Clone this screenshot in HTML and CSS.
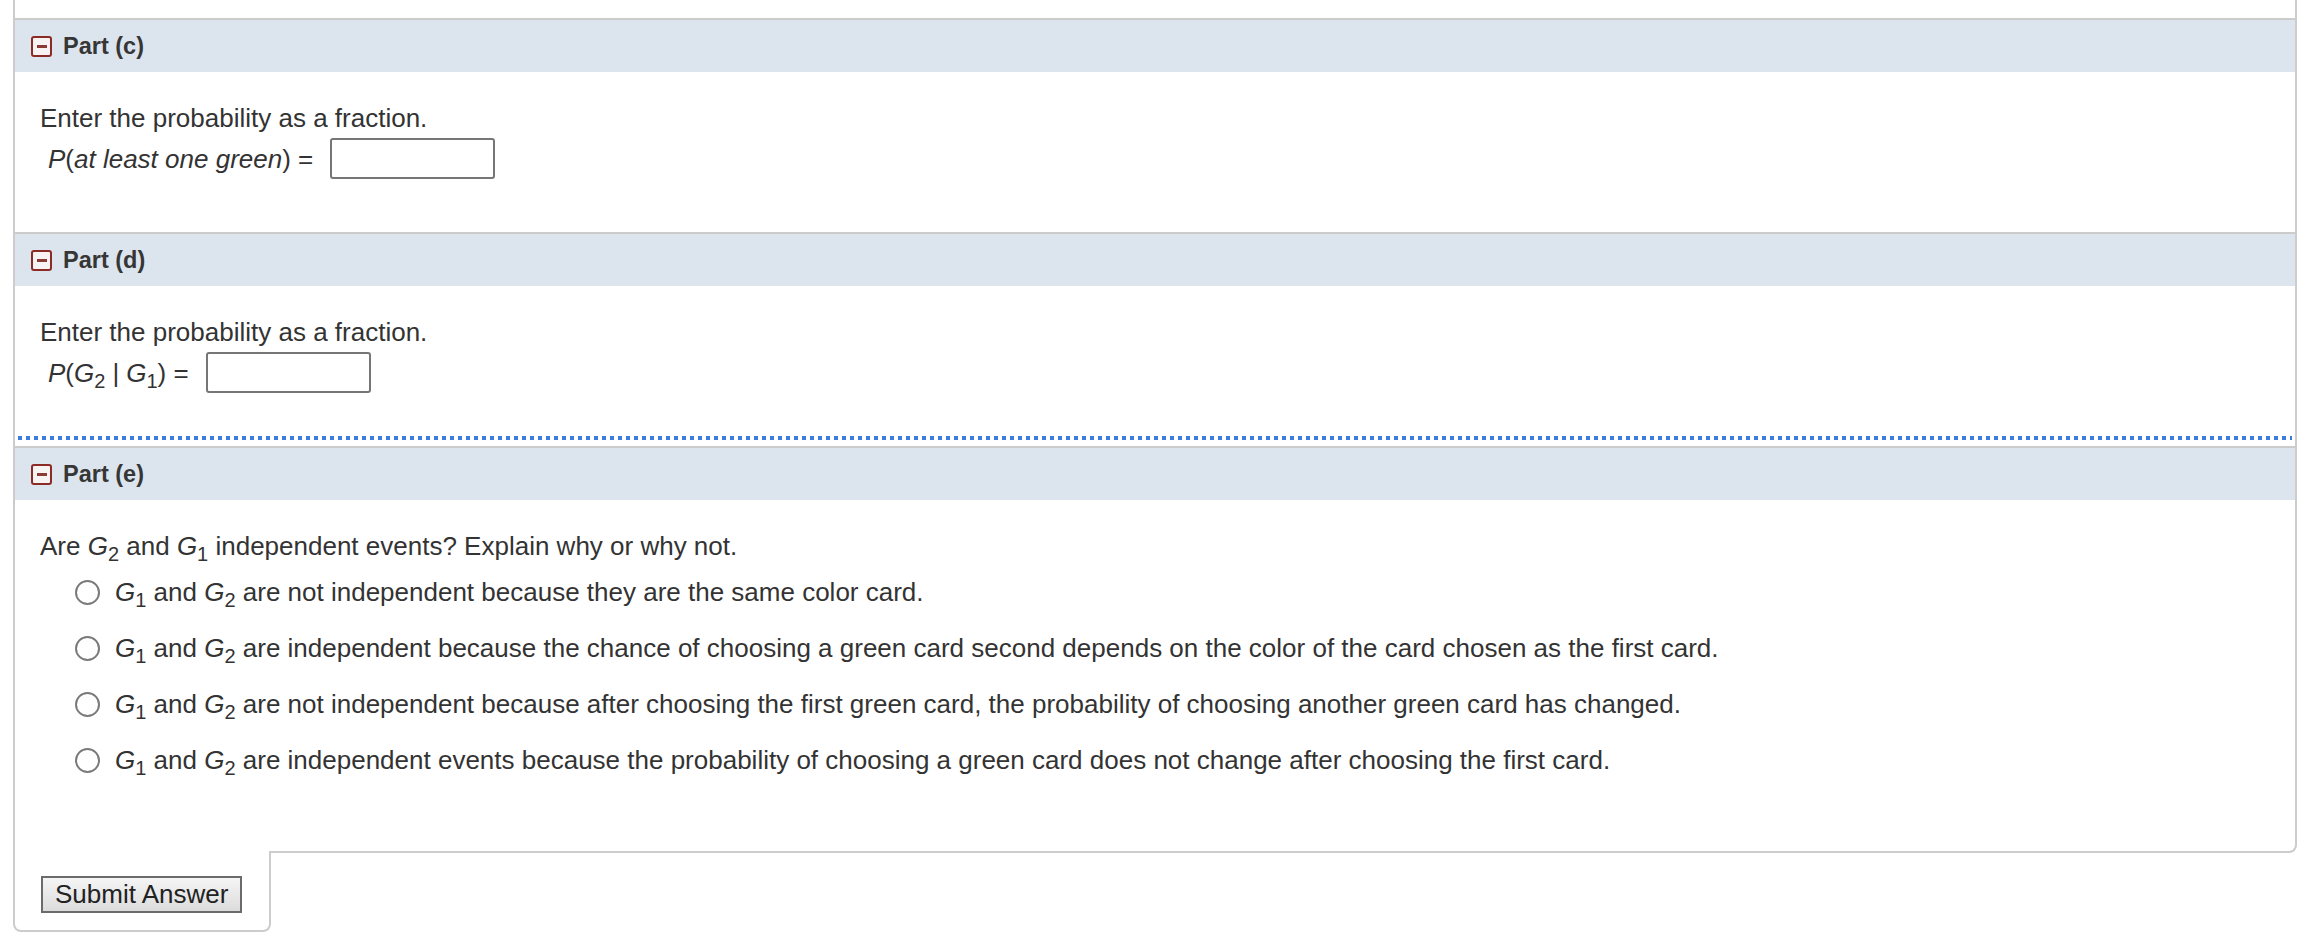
FILE: index.html
```html
<!DOCTYPE html>
<html lang="en">
<head>
<meta charset="utf-8">
<title>Parts</title>
<link rel="stylesheet" href="styles.css">
</head>
<body>
<div class="page">
  <div class="qbox">
    <div class="prev"></div>

    <section class="part">
      <div class="part-head"><span class="toggle"><span class="dash"></span></span><span class="part-title">Part (c)</span></div>
      <div class="part-body">
        <div class="line">Enter the probability as a fraction.</div>
        <div class="answer-row">
          <span class="expr"><i>P</i>(<i>at least one green</i>) =</span>
          <span class="input"></span>
        </div>
      </div>
    </section>

    <section class="part">
      <div class="part-head"><span class="toggle"><span class="dash"></span></span><span class="part-title">Part (d)</span></div>
      <div class="part-body part-body-focus">
        <div class="line">Enter the probability as a fraction.</div>
        <div class="answer-row">
          <span class="expr"><i>P</i>(<i>G</i><span class="sub">2</span><span class="bar">|</span><i>G</i><span class="sub">1</span>) =</span>
          <span class="input"></span>
        </div>
      </div>
      <div class="dots"></div>
    </section>

    <section class="part">
      <div class="part-head"><span class="toggle"><span class="dash"></span></span><span class="part-title">Part (e)</span></div>
      <div class="part-body part-body-last">
        <div class="line">Are <i>G</i><span class="sub">2</span> and <i>G</i><span class="sub">1</span> independent events? Explain why or why not.</div>
        <div class="choices">
          <div class="choice"><span class="radio"></span><span class="choice-text"><i>G</i><span class="sub">1</span> and <i>G</i><span class="sub">2</span> are not independent because they are the same color card.</span></div>
          <div class="choice"><span class="radio"></span><span class="choice-text"><i>G</i><span class="sub">1</span> and <i>G</i><span class="sub">2</span> are independent because the chance of choosing a green card second depends on the color of the card chosen as the first card.</span></div>
          <div class="choice"><span class="radio"></span><span class="choice-text"><i>G</i><span class="sub">1</span> and <i>G</i><span class="sub">2</span> are not independent because after choosing the first green card, the probability of choosing another green card has changed.</span></div>
          <div class="choice"><span class="radio"></span><span class="choice-text"><i>G</i><span class="sub">1</span> and <i>G</i><span class="sub">2</span> are independent events because the probability of choosing a green card does not change after choosing the first card.</span></div>
        </div>
      </div>
    </section>
  </div>
  <div class="footer">
    <button class="submit" type="button">Submit Answer</button>
  </div>
</div>
</body>
</html>
```

FILE: styles.css
```css
html, body {
  margin: 0;
  padding: 0;
  background: #ffffff;
}

body {
  font-family: "Liberation Sans", Arial, sans-serif;
  font-size: 26px;
  color: #333333;
}

.page {
  padding-left: 13px;
  width: 2284px;
}

.qbox {
  border-left: 2px solid #cccccc;
  border-right: 2px solid #cccccc;
  border-bottom: 2px solid #cccccc;
  border-bottom-right-radius: 8px;
  background: #ffffff;
}

.prev {
  height: 18px;
}

.part-head {
  display: flex;
  align-items: center;
  height: 52px;
  border-top: 2px solid #cccccc;
  background: #dce5ee;
  padding-left: 16px;
}

.toggle {
  box-sizing: border-box;
  width: 21px;
  height: 21px;
  border: 2px solid #8c2a26;
  border-radius: 3px;
  background: #f7f3f3;
  display: flex;
  align-items: center;
  justify-content: center;
}

.dash {
  display: block;
  width: 10px;
  height: 3px;
  background: #8c3a36;
}

.part-title {
  margin-left: 11px;
  font-weight: bold;
  font-size: 23.5px;
  color: #363636;
}

.part-body {
  padding: 31px 0 53px 25px;
}

.part-body-focus {
  padding-bottom: 43px;
}

.part-body-last {
  padding-bottom: 63px;
}

.line {
  height: 30px;
  line-height: 30px;
  white-space: nowrap;
}

.answer-row {
  display: flex;
  align-items: center;
  height: 41px;
  margin-top: 5px;
  padding-left: 8px;
}

.expr {
  white-space: nowrap;
  line-height: 30px;
}

.bar {
  margin: 0 7px;
}

.input {
  box-sizing: border-box;
  display: block;
  width: 165px;
  height: 41px;
  margin-left: 17px;
  border: 2px solid #767676;
  border-radius: 3px;
  background: #ffffff;
}

.sub {
  font-size: 20px;
  vertical-align: -6px;
  line-height: 0;
}

.dots {
  height: 4px;
  margin: 0 3px 6px 3px;
  background-image: linear-gradient(to right, #3b7ddb 0, #3b7ddb 4px, transparent 4px, transparent 8px);
  background-size: 8px 4px;
  background-repeat: repeat-x;
}

.choices {
  margin-top: 3px;
  padding-left: 35px;
}

.choice {
  display: flex;
  align-items: center;
  height: 56px;
}

.radio {
  box-sizing: border-box;
  display: block;
  width: 25px;
  height: 25px;
  border: 2px solid #7a7a7a;
  border-radius: 50%;
  background: #ffffff;
  flex: none;
}

.choice-text {
  margin-left: 15px;
  line-height: 30px;
  white-space: nowrap;
}

.footer {
  position: relative;
  margin-top: -2px;
  width: 258px;
  padding: 25px 0 17px 26px;
  box-sizing: border-box;
  height: 81px;
  border-left: 2px solid #cccccc;
  border-right: 2px solid #cccccc;
  border-bottom: 2px solid #cccccc;
  border-bottom-left-radius: 8px;
  border-bottom-right-radius: 8px;
  background: #ffffff;
}

.submit {
  box-sizing: border-box;
  height: 37px;
  padding: 0 12px;
  margin: 0;
  font-family: "Liberation Sans", Arial, sans-serif;
  font-size: 26px;
  line-height: 33px;
  color: #222222;
  background: linear-gradient(#f5f5f5, #dcdcdc);
  border: 2px solid #6b6b6b;
  border-radius: 0;
}
```
